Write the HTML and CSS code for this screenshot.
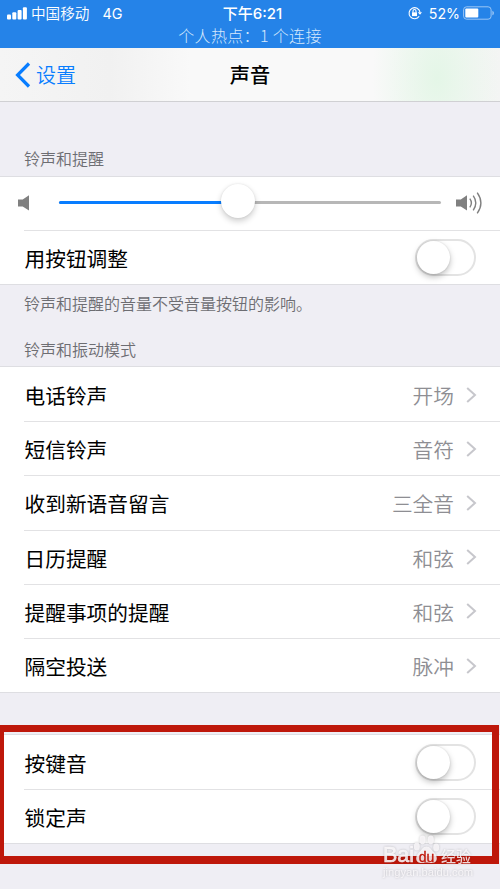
FILE: index.html
```html
<!DOCTYPE html>
<html lang="zh-CN">
<head>
<meta charset="utf-8">
<title>声音</title>
<link rel="stylesheet" href="styles.css">
</head>
<body>
<div class="screen">
  <header class="status">
    <div class="status-row">
      <div class="status-left">
        <svg class="signal" width="20" height="13" viewBox="0 0 20 13" fill="#fff"><rect x="0" y="7.5" width="4" height="5" rx="1"/><rect x="5.3" y="5.3" width="4" height="7.2" rx="1"/><rect x="10.6" y="3" width="4" height="9.5" rx="1"/><rect x="15.9" y="0.3" width="4" height="12.2" rx="1"/></svg>
        <span class="carrier">中国移动</span><span class="network">4G</span>
      </div>
      <div class="time">下午6:21</div>
      <div class="status-right">
        <svg class="lock" width="14" height="14" viewBox="0 0 14 14" fill="none" stroke="#fff" stroke-width="1.1"><path d="M11.2 10.2A5.5 5.5 0 1 1 12 6.2"/><path d="M9.8 6.2h4.2l-2 2.5z" fill="#fff" stroke="none"/><rect x="4" y="6.3" width="5" height="3.8" fill="#fff" stroke="none"/><path d="M5 6.4V5a1.5 1.5 0 0 1 3 0v1.4"/></svg>
        <span class="percent">52%</span>
        <svg width="32" height="14" viewBox="0 0 32 14"><rect x=".6" y=".8" width="27.5" height="12.4" rx="3" fill="none" stroke="#9bc6f5" stroke-width="1"/><rect x="2.3" y="2.6" width="13" height="8.8" rx="1" fill="#fff"/><path d="M29.4 4.7c2 .8 2 3.8 0 4.6z" fill="#9bc6f5"/></svg>
      </div>
    </div>
    <div class="hotspot">个人热点：1 个连接</div>
  </header>
  <nav class="nav">
    <a class="back"><svg width="16" height="26" viewBox="0 0 16 26" fill="none" stroke="#087dff" stroke-width="3.2"><path d="M14 1.5 2.6 13 14 24.5"/></svg><span>设置</span></a>
    <h1>声音</h1>
  </nav>
  <main>
    <h2 class="caption first">铃声和提醒</h2>
    <section class="group">
      <div class="row slider-row">
        <svg class="quiet" width="12" height="16" viewBox="0 0 12 16" fill="#808080"><path d="M0 4.6h4.7L11 .3v15.2l-6.3-4H0z"/></svg>
        <div class="slider"><div class="fill"></div><div class="knob"></div></div>
        <svg class="loud" width="27" height="22" viewBox="0 0 27 22" fill="none" stroke="#808080" stroke-width="1.4"><path d="M0 7.6h4.8L11 3.3v15.2l-6.2-4H0z" fill="#808080" stroke="none"/><path d="M13.8 6.7q3.2 4.3 0 8.6M17.2 3.7q5.2 7.3 0 14.6M21.2.6q7.4 10.4 0 20.8"/></svg>
      </div>
      <div class="row line"><span>用按钮调整</span><i class="switch"></i></div>
    </section>
    <p class="caption note">铃声和提醒的音量不受音量按钮的影响。</p>
    <h2 class="caption second">铃声和振动模式</h2>
    <section class="group list">
      <div class="row"><span>电话铃声</span><span class="value">开场</span><svg class="chev" width="11" height="16" viewBox="0 0 11 16"><path d="M1.2 .9 9 8l-7.8 7.1"/></svg></div>
      <div class="row line"><span>短信铃声</span><span class="value">音符</span><svg class="chev" width="11" height="16" viewBox="0 0 11 16"><path d="M1.2 .9 9 8l-7.8 7.1"/></svg></div>
      <div class="row line"><span>收到新语音留言</span><span class="value">三全音</span><svg class="chev" width="11" height="16" viewBox="0 0 11 16"><path d="M1.2 .9 9 8l-7.8 7.1"/></svg></div>
      <div class="row line"><span>日历提醒</span><span class="value">和弦</span><svg class="chev" width="11" height="16" viewBox="0 0 11 16"><path d="M1.2 .9 9 8l-7.8 7.1"/></svg></div>
      <div class="row line"><span>提醒事项的提醒</span><span class="value">和弦</span><svg class="chev" width="11" height="16" viewBox="0 0 11 16"><path d="M1.2 .9 9 8l-7.8 7.1"/></svg></div>
      <div class="row line"><span>隔空投送</span><span class="value">脉冲</span><svg class="chev" width="11" height="16" viewBox="0 0 11 16"><path d="M1.2 .9 9 8l-7.8 7.1"/></svg></div>
    </section>
    <section class="group last">
      <div class="row"><span>按键音</span><i class="switch"></i></div>
      <div class="row line"><span>锁定声</span><i class="switch"></i></div>
    </section>
  </main>
  <div class="highlight"></div>
  <div class="watermark">
    <div class="brand"><span class="latin">Bai</span><svg width="27" height="29" viewBox="0 0 27 29"><g class="paw"><ellipse cx="3.8" cy="11.5" rx="3" ry="4"/><ellipse cx="9.5" cy="5" rx="3.1" ry="4.4"/><ellipse cx="17.8" cy="5" rx="3.1" ry="4.4"/><ellipse cx="23.2" cy="12.5" rx="3" ry="4"/><path d="M13.5 11.5c4 0 4.5 3.5 7.5 6 3.5 3 4.5 10-1.5 10.5-3 .2-4-.6-6-.6s-3 .8-6 .6c-6-.5-5-7.5-1.500-10.500 3-2.500 3.500-6 7.500-6z"/></g><text x="13.5" y="26.5" text-anchor="middle">du</text></svg><span class="cn">经验</span></div>
    <div class="site">jingyan.baidu.com</div>
  </div>
</div>
</body>
</html>
```
FILE: styles.css
```css
* { box-sizing: border-box; }
body { margin: 0; font-family: "Noto Sans CJK SC", sans-serif; color: #000; }
.screen { position: relative; width: 500px; height: 889px; overflow: hidden; background: #efeef4; }
.status { height: 48px; background: #2583e8; color: #fff; }
.status-row { display: grid; grid-template-columns: 1fr auto 1fr; height: 25px; align-items: center; padding: 0 5px 0 7px; font-size: 14.6px; line-height: 25px; }
.status-left, .status-right { display: flex; align-items: center; }
.status-right { justify-content: flex-end; }
.carrier { margin: -1px 0 1px 4px; font-weight: 350; }
.network { margin: 1px 0 0 13px; font-family: Inter, sans-serif; font-size: 14.4px; }
.time { font-family: Inter, "Noto Sans CJK SC", sans-serif; font-weight: 500; font-size: 15px; padding-left: 3px; }
.lock { margin-right: -1px; }
.percent { font-family: Inter, sans-serif; font-size: 14.2px; margin: 1px 3px 0 8px; }
.hotspot { text-align: center; font-size: 16px; line-height: 20px; font-weight: 300; letter-spacing: .35px; color: #d5e8fc; }
.nav { height: 54px; border-bottom: 1px solid #d0d0d3; background: radial-gradient(ellipse 65px 110px at 437px 30px, #e4f6e7, rgba(228,246,231,0)), linear-gradient(90deg, #f5f5f5, #f1f1f1 22%, #f9f9f9 38%, #f9f9f9 78%, #f4f5f4); display: grid; grid-template-columns: 1fr auto 1fr; align-items: center; }
.back { display: flex; align-items: center; gap: 5px; padding: 1px 0 0 15px; color: #087dff; font-size: 20px; line-height: 30px; font-weight: 350; }
.nav h1 { margin: 0; font-size: 20.2px; line-height: 30px; font-weight: 500; grid-column: 2; }
.caption { margin: 0; padding-left: 24px; font-size: 16px; line-height: 24px; font-weight: 350; color: #6d6d72; }
.first { padding-top: 44px; height: 74px; }
.note { padding-top: 6px; height: 46px; }
.second { padding-top: 6px; height: 35px; }
.group { background: #fff; border-top: 1px solid #dedee2; border-bottom: 1px solid #dedee2; }
.row { position: relative; display: flex; align-items: center; height: 54px; padding: 1px 24px 0 24.5px; font-size: 20.7px; line-height: 30px; font-weight: 400; }
.list .row { height: 54.2px; padding-top: 2px; }
.line::before { content: ""; position: absolute; left: 24px; right: 0; top: 0; height: 1px; background: #e2e2e4; }
.value { margin-left: auto; font-weight: 350; color: #8e8e93; }
.chev { margin: -1px -1px 0 12px; fill: none; stroke: #c7c7cc; stroke-width: 2; }
.slider-row { padding: 0 17px 2px 18px; height: 53px; }
.slider { position: relative; width: 382px; height: 3px; border-radius: 2px; margin-left: 29px; background: #b7b7b7; }
.fill { width: 180px; height: 3px; border-radius: 2px; background: #087dff; }
.knob { position: absolute; left: 162px; top: -17px; width: 34px; height: 34px; border-radius: 50%; background: #fff; box-shadow: 0 3px 6px rgba(0,0,0,.2), 0 0 2px rgba(0,0,0,.1); }
.loud { margin-left: 15px; }
.switch { position: relative; width: 61px; height: 37px; margin-left: auto; border: 2px solid #e3e3e3; border-radius: 19px; }
.switch::after { content: ""; position: absolute; left: 0; top: 0; width: 33px; height: 33px; border-radius: 50%; background: #fff; box-shadow: 0 3px 6px rgba(0,0,0,.26), 0 0 2px rgba(0,0,0,.12); }
.last { margin-top: 41px; }
.highlight { position: absolute; left: 0; top: 725px; width: 499px; height: 139px; border: 7px solid #be170a; border-left-width: 4px; border-bottom-width: 8px; }
.watermark { position: absolute; left: 383px; top: 835px; width: 100px; color: rgba(250,248,250,.86); filter: drop-shadow(0 0 1px rgba(0,0,0,.24)); }
.brand { display: flex; align-items: flex-end; height: 29px; font-family: "Liberation Sans", sans-serif; font-weight: 400; line-height: 18px; }
.latin { width: 30px; font-size: 21.5px; -webkit-text-stroke: .6px rgba(250,248,250,.86); }
.brand .cn { font-family: "Noto Sans CJK SC", sans-serif; font-size: 15px; font-weight: 500; margin-left: 1px; line-height: 17px; }
.paw { fill: rgba(250,248,250,.86); }
.brand text { fill: #be170a; font: 400 14px "Liberation Sans", sans-serif; stroke: #be170a; stroke-width: .3; }
.site { padding-top: 1px; font-family: "Liberation Sans", sans-serif; font-size: 11.2px; line-height: 14px; }
```
